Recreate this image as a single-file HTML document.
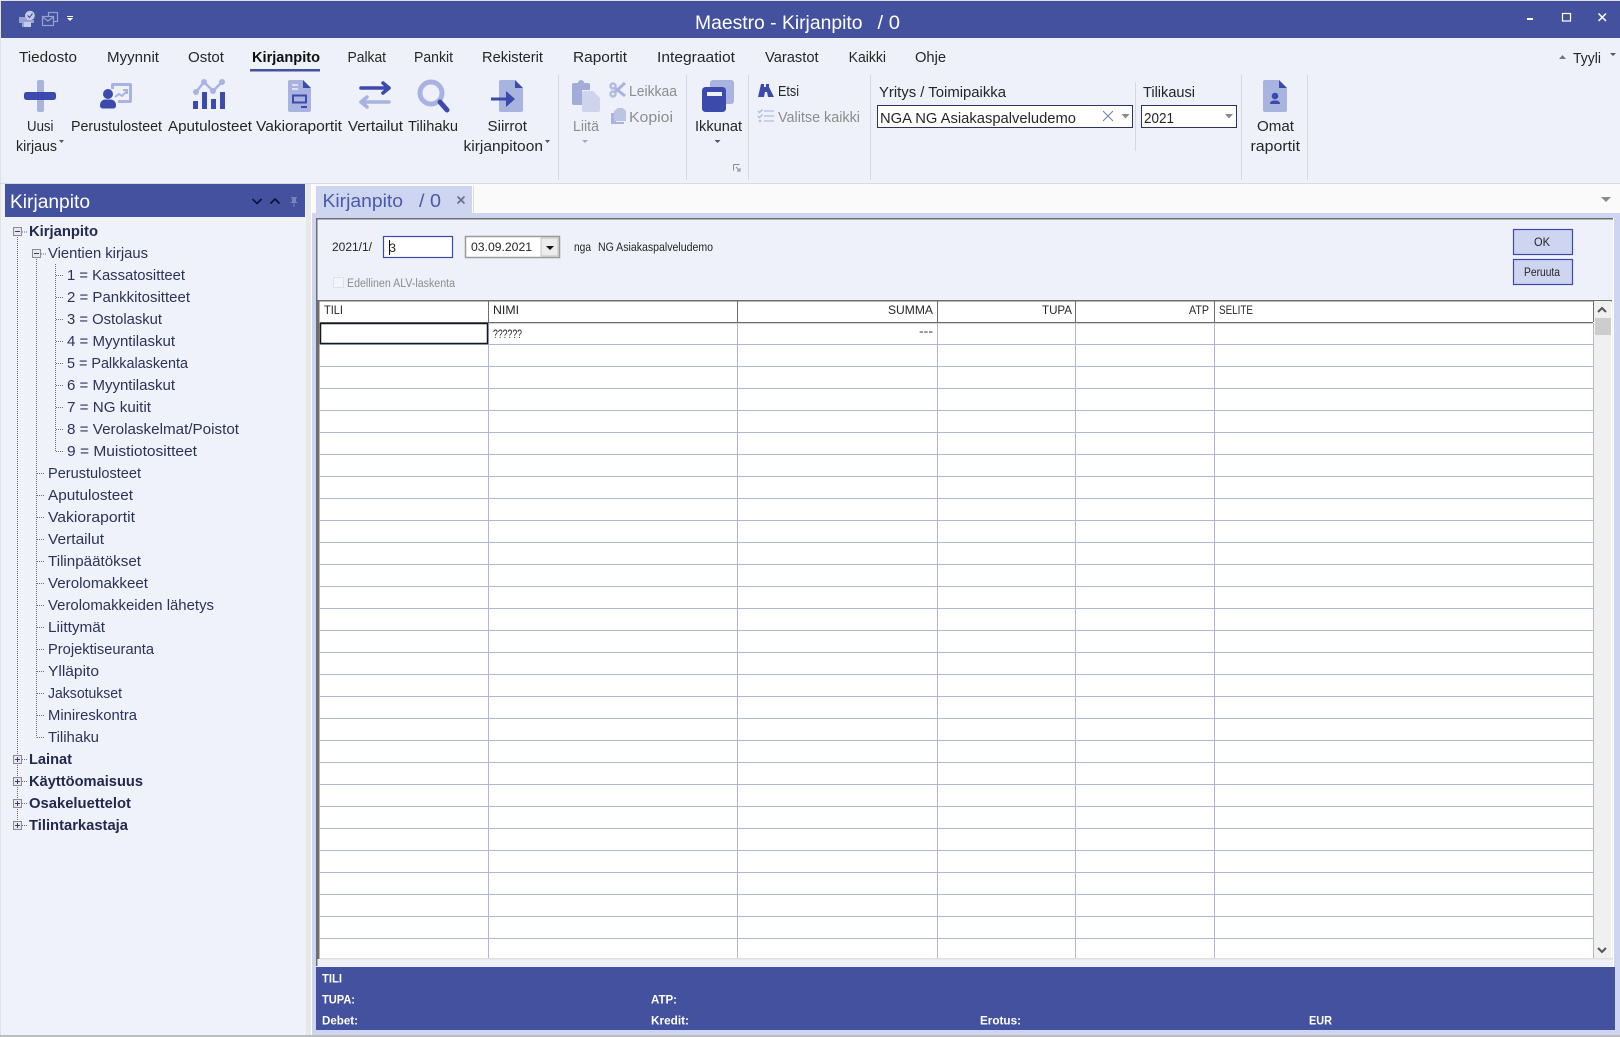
<!DOCTYPE html>
<html lang="fi"><head><meta charset="utf-8"><title>Maestro - Kirjanpito</title>
<style>
html,body{margin:0;padding:0;background:#eef1fa;overflow:hidden}
svg{display:block}
text{font-family:"Liberation Sans",sans-serif;white-space:pre}
.r{font-size:15px;fill:#262626}
.g{font-size:15px;fill:#8d8d8d}
.t{font-size:14.6px;fill:#2d3258}
.b{font-size:14.6px;fill:#23284f;font-weight:bold}
.s{font-size:12.2px;fill:#262626}
.f{font-size:12.4px;fill:#fff;font-weight:bold}
.l{fill:#a9b3e0}.d{fill:#3b4aab}
</style></head><body>
<svg xmlns="http://www.w3.org/2000/svg" width="1620" height="1037" viewBox="0 0 1620 1037">
<rect width="1620" height="1037" fill="#eef1fa"/>
<rect x="0" y="0" width="1620" height="1" fill="#e2e2e2"/>
<rect x="0" y="0" width="1" height="1037" fill="#e2e2e2"/>
<rect x="1" y="1" width="1619" height="37" fill="#43519e"/>

<!-- QAT -->
<path fill="#98a3d2" d="M19 17h6v-3h4v3h3v3h2v3h-3v4h-9v-4h-3z"/>
<rect x="24" y="22" width="7" height="5" fill="#c4cbe8"/>
<circle cx="30" cy="15.500" r="4.800" fill="#c4cbe8"/>
<path d="M27.500 15.500l2 2 3-4" stroke="#43519e" stroke-width="1.100" fill="none"/>
<g fill="none" stroke="#98a3d2" stroke-width="1.200">
<rect x="48.500" y="12.500" width="9" height="9"/><rect x="42.500" y="16.500" width="11" height="9" fill="#43519e"/><path d="M42.500 17l5.500 4 5.500-4"/>
</g>
<path d="M67 16h6v1h-6zM67 18h6l-3 3z" fill="#fff"/>

<!-- title -->
<text x="695" y="29" font-size="19.500" fill="#fff" textLength="167.500" lengthAdjust="spacingAndGlyphs">Maestro - Kirjanpito</text>
<text x="877.500" y="29" font-size="19.500" fill="#fff" textLength="22.500" lengthAdjust="spacingAndGlyphs">/ 0</text>
<rect x="1527" y="18" width="6" height="2" fill="#fff"/>
<rect x="1562.500" y="13.500" width="8" height="7.500" fill="none" stroke="#fff" stroke-width="1.200"/>
<path d="M1598.500 13.500l7.500 7.500M1606 13.500l-7.500 7.500" stroke="#fff" stroke-width="1.500"/>

<!-- menu tabs -->
<text class="r" x="19" y="62" textLength="58" lengthAdjust="spacingAndGlyphs">Tiedosto</text>
<text class="r" x="107" y="62" textLength="52" lengthAdjust="spacingAndGlyphs">Myynnit</text>
<text class="r" x="188" y="62" textLength="36" lengthAdjust="spacingAndGlyphs">Ostot</text>
<text class="r" x="252" y="62" textLength="68" lengthAdjust="spacingAndGlyphs" font-weight="bold" style="fill:#111">Kirjanpito</text>
<text class="r" x="347.500" y="62" textLength="38.500" lengthAdjust="spacingAndGlyphs">Palkat</text>
<text class="r" x="414" y="62" textLength="39" lengthAdjust="spacingAndGlyphs">Pankit</text>
<text class="r" x="482" y="62" textLength="61" lengthAdjust="spacingAndGlyphs">Rekisterit</text>
<text class="r" x="573" y="62" textLength="54" lengthAdjust="spacingAndGlyphs">Raportit</text>
<text class="r" x="657" y="62" textLength="78" lengthAdjust="spacingAndGlyphs">Integraatiot</text>
<text class="r" x="765" y="62" textLength="53.600" lengthAdjust="spacingAndGlyphs">Varastot</text>
<text class="r" x="848.600" y="62" textLength="37.400" lengthAdjust="spacingAndGlyphs">Kaikki</text>
<text class="r" x="915" y="62" textLength="31" lengthAdjust="spacingAndGlyphs">Ohje</text>
<text class="r" x="1573" y="63" textLength="28" lengthAdjust="spacingAndGlyphs">Tyyli</text>
<rect x="250" y="69" width="70" height="2.500" fill="#43519e"/>
<path d="M1559 59l3.500-4 3.500 4z" fill="#777"/>
<path d="M1610 53h6l-3 3z" fill="#555"/>

<!-- ribbon separators -->
<g fill="#d6d8de">
<rect x="558" y="75" width="1" height="105"/><rect x="686" y="75" width="1" height="105"/>
<rect x="748" y="75" width="1" height="105"/><rect x="870" y="75" width="1" height="105"/>
<rect x="1135" y="82" width="1" height="69"/><rect x="1241" y="75" width="1" height="105"/>
<rect x="1307" y="75" width="1" height="105"/>
</g>

<!-- Uusi -->
<rect x="37" y="80" width="7" height="32" rx="2" class="l"/>
<rect x="24" y="92" width="32" height="8" rx="2.500" class="d"/>
<!-- Perustulosteet -->
<path class="l" d="M115 83h15a2 2 0 0 1 2 2v16a2 2 0 0 1-2 2h-12v-3h11V86h-15v3h-3v-4a2 2 0 0 1 2-2z"/>
<path d="M115 97l4-3 3 2 5-5M123 90h4v4" fill="none" stroke="#a9b3e0" stroke-width="2"/>
<circle cx="108" cy="94" r="5" class="d"/>
<path class="d" d="M100 105c0-3 2.500-5.500 5-5.500h6c2.500 0 5 2.500 5 5.500 0 2.500-1 3.500-3 3.500h-10c-2 0-3-1-3-3.500z"/>
<!-- Aputulosteet -->
<path d="M196 92l8-10 9 9 9-9" fill="none" stroke="#a9b3e0" stroke-width="2.500"/>
<g class="l"><circle cx="196" cy="92" r="3"/><circle cx="204" cy="82" r="3"/><circle cx="213" cy="91" r="3"/><circle cx="222" cy="82" r="3"/></g>
<g class="d"><rect x="193" y="101" width="5" height="8"/><rect x="202" y="92" width="5" height="17"/><rect x="211" y="99" width="5" height="10"/><rect x="220" y="92" width="5" height="17"/></g>
<!-- Vakioraportit -->
<g transform="translate(20 0)">
<path class="l" d="M270 80h13l8 8v22a2 2 0 0 1-2 2h-19a2 2 0 0 1-2-2V82a2 2 0 0 1 2-2z"/>
<path class="d" d="M283 80l8 8h-8z"/>
<path d="M272 85h6M272 89h6" stroke="#eef1fa" stroke-width="1.500"/>
<rect x="273" y="95.500" width="13" height="7" fill="none" stroke="#3b4aab" stroke-width="2"/>
<rect x="281" y="106" width="6" height="2" class="d"/>
</g>
<!-- Vertailut -->
<path d="M361 88h28M383 83l6 5-6 5" fill="none" stroke="#3b4aab" stroke-width="3.600" stroke-linecap="round" stroke-linejoin="round"/>
<path d="M389 102h-28M367 97l-6 5 6 5" fill="none" stroke="#a9b3e0" stroke-width="3.600" stroke-linecap="round" stroke-linejoin="round"/>
<!-- Tilihaku -->
<circle cx="431" cy="93" r="11" fill="none" stroke="#a9b3e0" stroke-width="5"/>
<path d="M440 102l7 8" stroke="#3b4aab" stroke-width="5" stroke-linecap="round"/>
<!-- Siirrot -->
<path class="l" d="M501 80h14l8 8v22a2 2 0 0 1-2 2h-20a2 2 0 0 1-2-2V82a2 2 0 0 1 2-2z"/>
<path class="d" d="M515 80l8 8h-8z"/>
<path class="d" d="M491 97.500h15V91l9 8-9 8v-6.500h-15z"/>
<!-- Liita -->
<path fill="#a3acd9" d="M574 83h4a3 3 0 0 1 6 0h4a2 2 0 0 1 2 2v5h-8v15h-8a2 2 0 0 1-2-2V85a2 2 0 0 1 2-2z"/>
<path fill="#ced4ec" d="M584 91h9l7 7v12a2 2 0 0 1-2 2h-14a2 2 0 0 1-2-2V93a2 2 0 0 1 2-2z"/>
<!-- Leikkaa -->
<g fill="none" stroke="#b4bce2" stroke-width="2.500"><circle cx="613" cy="86" r="2.500"/><circle cx="613" cy="94" r="2.500"/></g>
<path d="M615 88l10 8M615 92l10-9" stroke="#a9b3e0" stroke-width="3"/>
<!-- Kopioi -->
<path fill="#a9b3e0" d="M611 113h5v9h8v2h-13z"/>
<path fill="#bcc4e6" d="M618 108h5l3 3v10h-12v-10z"/>
<!-- Ikkunat -->
<rect x="710" y="80" width="24" height="24" rx="3" class="l"/>
<rect x="702" y="87" width="24" height="25" rx="3.500" class="d"/>
<rect x="707" y="92" width="15" height="4" fill="#eef1fa"/>
<!-- launcher -->
<path d="M733.500 164.500h6M733.500 164.500v6M740 171l-4-4M740 168v3h-3" fill="none" stroke="#8c8c8c" stroke-width="1"/>
<!-- Etsi -->
<path class="d" d="M761 84h3v3h2v-3h3v3l5 10h-6l-1-5h-2l-1 5h-6z"/>
<!-- Valitse kaikki -->
<g transform="translate(14 -1)">
<path d="M744 112l1.500 1.500 3-3M744 117l1.500 1.500 3-3" fill="none" stroke="#b4bce2" stroke-width="1.500"/>
<circle cx="746" cy="122" r="1.300" fill="#b4bce2"/>
<path d="M750 112h10M750 117h10M750 122h10" stroke="#c4cbea" stroke-width="1.800"/>
</g>
<!-- Omat -->
<g transform="translate(6 0)">
<path class="l" d="M1259 80h14l8 8v22a2 2 0 0 1-2 2h-20a2 2 0 0 1-2-2V82a2 2 0 0 1 2-2z"/>
<path class="d" d="M1273 80l8 8h-8z"/>
<circle cx="1269" cy="96" r="3.300" class="d"/>
<path class="d" d="M1264 104c0-2.500 2-3.500 3.500-3.500h3c1.500 0 3.500 1 3.500 3.500z"/>
</g>

<!-- ribbon labels -->
<text class="r" x="27" y="131" textLength="26.500" lengthAdjust="spacingAndGlyphs">Uusi</text>
<text class="r" x="16" y="151" textLength="41" lengthAdjust="spacingAndGlyphs">kirjaus</text>
<path d="M59 140h5l-2.500 3z" fill="#555"/>
<text class="r" x="71" y="131" textLength="91" lengthAdjust="spacingAndGlyphs">Perustulosteet</text>
<text class="r" x="168" y="131" textLength="84" lengthAdjust="spacingAndGlyphs">Aputulosteet</text>
<text class="r" x="256" y="131" textLength="86" lengthAdjust="spacingAndGlyphs">Vakioraportit</text>
<text class="r" x="348" y="131" textLength="55" lengthAdjust="spacingAndGlyphs">Vertailut</text>
<text class="r" x="408" y="131" textLength="50" lengthAdjust="spacingAndGlyphs">Tilihaku</text>
<text class="r" x="487.500" y="131" textLength="39.500" lengthAdjust="spacingAndGlyphs">Siirrot</text>
<text class="r" x="463.500" y="151" textLength="79.500" lengthAdjust="spacingAndGlyphs">kirjanpitoon</text>
<path d="M545 140h5l-2.500 3z" fill="#555"/>
<text class="g" x="573" y="131" textLength="26" lengthAdjust="spacingAndGlyphs">Liitä</text>
<path d="M582 140h6l-3 3z" fill="#aaa"/>
<text class="g" x="629" y="96" textLength="48" lengthAdjust="spacingAndGlyphs">Leikkaa</text>
<text class="g" x="629" y="122" textLength="44" lengthAdjust="spacingAndGlyphs">Kopioi</text>
<text class="r" x="695" y="131" textLength="47" lengthAdjust="spacingAndGlyphs">Ikkunat</text>
<path d="M714.500 140h6l-3 3z" fill="#555"/>
<text class="r" x="778" y="96" textLength="21" lengthAdjust="spacingAndGlyphs">Etsi</text>
<text class="g" x="778" y="122" textLength="82" lengthAdjust="spacingAndGlyphs">Valitse kaikki</text>
<text class="r" x="879" y="97" textLength="127" lengthAdjust="spacingAndGlyphs">Yritys / Toimipaikka</text>
<rect x="877.500" y="105.500" width="255" height="22" fill="#fff" stroke="#2c3560" stroke-width="1"/>
<text class="r" x="880" y="123" textLength="196" lengthAdjust="spacingAndGlyphs">NGA NG Asiakaspalveludemo</text>
<path d="M1103 111l10 10M1113 111l-10 10" stroke="#6f7fa8" stroke-width="1"/>
<path d="M1121.500 114h8l-4 4.500z" fill="#888"/>
<text class="r" x="1143" y="97" textLength="52" lengthAdjust="spacingAndGlyphs">Tilikausi</text>
<rect x="1141.500" y="105.500" width="95" height="22" fill="#fff" stroke="#2c3560" stroke-width="1"/>
<text class="r" x="1144" y="123" textLength="30" lengthAdjust="spacingAndGlyphs">2021</text>
<path d="M1225 114h8l-4 4.500z" fill="#888"/>
<text class="r" x="1257" y="131" textLength="37" lengthAdjust="spacingAndGlyphs">Omat</text>
<text class="r" x="1250.500" y="151" textLength="49.500" lengthAdjust="spacingAndGlyphs">raportit</text>

<!-- ribbon bottom -->
<rect x="0" y="183" width="1620" height="1" fill="#d8dae0"/>

<!-- left panel -->
<rect x="1" y="184" width="305" height="852" fill="#eff2fb"/>
<rect x="5" y="184" width="300" height="33" fill="#43519e"/>
<text x="10" y="208" font-size="19" fill="#fff" textLength="80" lengthAdjust="spacingAndGlyphs">Kirjanpito</text>
<path d="M252.500 199l4.500 4.500 4.500-4.500M270.500 203.500l4.500-4.500 4.500 4.500" fill="none" stroke="#0d1130" stroke-width="1.600"/>
<path d="M291 197h6v1h-1v4h1.500v1h-3v4h-1v-4h-3v-1h1.500v-4h-1z" fill="#7b84b8"/>

<!-- tree connectors -->
<g stroke="#6c6c74" stroke-width="1" stroke-dasharray="1 1" fill="none">
<path d="M17.500 237V822M36.500 259V737.500M55.500 264V451.500"/>
<path d="M22 232h6M41 254h6"/>
<path d="M56 275.500h8M56 297.500h8M56 319.500h8M56 341.500h8M56 363.500h8M56 385.500h8M56 407.500h8M56 429.500h8M56 451.500h8"/>
<path d="M37 473.500h8M37 495.500h8M37 517.500h8M37 539.500h8M37 561.500h8M37 583.500h8M37 605.500h8M37 627.500h8M37 649.500h8M37 671.500h8M37 693.500h8M37 715.500h8M37 737.500h8"/>
<path d="M22 759.500h6M22 781.500h6M22 803.500h6M22 825.500h6"/>
</g>
<g fill="#e8e8ec" stroke="#8a8a92" stroke-width="1">
<rect x="13.500" y="227.500" width="8" height="8"/><rect x="32.500" y="249.500" width="8" height="8"/>
<rect x="13.500" y="755.500" width="8" height="8"/><rect x="13.500" y="777.500" width="8" height="8"/>
<rect x="13.500" y="799.500" width="8" height="8"/><rect x="13.500" y="821.500" width="8" height="8"/>
</g>
<path d="M15 231.500h5M34 253.500h5M15 759.500h5M17.500 757v5M15 781.500h5M17.500 779v5M15 803.500h5M17.500 801v5M15 825.500h5M17.500 823v5" stroke="#3a3f70" stroke-width="1"/>

<!-- tree -->
<text class="b" x="29" y="236" textLength="69" lengthAdjust="spacingAndGlyphs">Kirjanpito</text>
<text class="t" x="48" y="258" textLength="100" lengthAdjust="spacingAndGlyphs">Vientien kirjaus</text>
<text class="t" x="67" y="280" textLength="118" lengthAdjust="spacingAndGlyphs">1 = Kassatositteet</text>
<text class="t" x="67" y="302" textLength="123" lengthAdjust="spacingAndGlyphs">2 = Pankkitositteet</text>
<text class="t" x="67" y="324" textLength="95" lengthAdjust="spacingAndGlyphs">3 = Ostolaskut</text>
<text class="t" x="67" y="346" textLength="108" lengthAdjust="spacingAndGlyphs">4 = Myyntilaskut</text>
<text class="t" x="67" y="368" textLength="121" lengthAdjust="spacingAndGlyphs">5 = Palkkalaskenta</text>
<text class="t" x="67" y="390" textLength="108" lengthAdjust="spacingAndGlyphs">6 = Myyntilaskut</text>
<text class="t" x="67" y="412" textLength="84" lengthAdjust="spacingAndGlyphs">7 = NG kuitit</text>
<text class="t" x="67" y="434" textLength="172" lengthAdjust="spacingAndGlyphs">8 = Verolaskelmat/Poistot</text>
<text class="t" x="67" y="456" textLength="130" lengthAdjust="spacingAndGlyphs">9 = Muistiotositteet</text>
<text class="t" x="48" y="478" textLength="93" lengthAdjust="spacingAndGlyphs">Perustulosteet</text>
<text class="t" x="48" y="500" textLength="85" lengthAdjust="spacingAndGlyphs">Aputulosteet</text>
<text class="t" x="48" y="522" textLength="87" lengthAdjust="spacingAndGlyphs">Vakioraportit</text>
<text class="t" x="48" y="544" textLength="56" lengthAdjust="spacingAndGlyphs">Vertailut</text>
<text class="t" x="48" y="566" textLength="93" lengthAdjust="spacingAndGlyphs">Tilinpäätökset</text>
<text class="t" x="48" y="588" textLength="100" lengthAdjust="spacingAndGlyphs">Verolomakkeet</text>
<text class="t" x="48" y="610" textLength="166" lengthAdjust="spacingAndGlyphs">Verolomakkeiden lähetys</text>
<text class="t" x="48" y="632" textLength="57" lengthAdjust="spacingAndGlyphs">Liittymät</text>
<text class="t" x="48" y="654" textLength="106" lengthAdjust="spacingAndGlyphs">Projektiseuranta</text>
<text class="t" x="48" y="676" textLength="51" lengthAdjust="spacingAndGlyphs">Ylläpito</text>
<text class="t" x="48" y="698" textLength="74" lengthAdjust="spacingAndGlyphs">Jaksotukset</text>
<text class="t" x="48" y="720" textLength="89" lengthAdjust="spacingAndGlyphs">Minireskontra</text>
<text class="t" x="48" y="742" textLength="51" lengthAdjust="spacingAndGlyphs">Tilihaku</text>
<text class="b" x="29" y="764" textLength="43" lengthAdjust="spacingAndGlyphs">Lainat</text>
<text class="b" x="29" y="786" textLength="114" lengthAdjust="spacingAndGlyphs">Käyttöomaisuus</text>
<text class="b" x="29" y="808" textLength="102" lengthAdjust="spacingAndGlyphs">Osakeluettelot</text>
<text class="b" x="29" y="830" textLength="99" lengthAdjust="spacingAndGlyphs">Tilintarkastaja</text>

<!-- splitter + doc frame -->
<rect x="306" y="184" width="5" height="852" fill="#e8e8e8"/>
<rect x="311" y="184" width="1" height="852" fill="#fff"/>
<rect x="312" y="184" width="1308" height="851" fill="#cdd5f0"/>
<rect x="312" y="184" width="1308" height="29" fill="#fafafa"/>
<rect x="316" y="186" width="156" height="27" fill="#cdd5f0"/>
<rect x="473" y="186" width="1" height="27" fill="#dcdcdc"/>
<text x="322.500" y="207" font-size="18" fill="#4a5aa8" textLength="80.500" lengthAdjust="spacingAndGlyphs">Kirjanpito</text>
<text x="419" y="207" font-size="18" fill="#4a5aa8" textLength="22" lengthAdjust="spacingAndGlyphs">/ 0</text>
<path d="M457.500 196.500l7 7M464.500 196.500l-7 7" stroke="#6a6f88" stroke-width="1.700"/>
<path d="M1601 197h10l-5 5z" fill="#8a8a8a"/>

<!-- doc -->
<rect x="316" y="218" width="1297" height="749" fill="#eef1fa"/>
<rect x="316" y="218" width="1297" height="1.500" fill="#6e6e6e"/>
<rect x="316" y="218" width="1.500" height="748" fill="#6e6e6e"/>
<rect x="1613" y="218" width="1" height="749" fill="#fff"/>

<text class="s" x="332" y="251" textLength="40" lengthAdjust="spacingAndGlyphs">2021/1/</text>
<rect x="383.500" y="236.500" width="69" height="21" fill="#fff" stroke="#3b4aab" stroke-width="1.200"/>
<path d="M389.500 240v15" stroke="#111" stroke-width="1"/>
<text class="s" x="389" y="252" textLength="7" lengthAdjust="spacingAndGlyphs">3</text>
<rect x="465.500" y="236.500" width="94" height="21" fill="#fff" stroke="#9a9a9a" stroke-width="1.500"/>
<text class="s" x="471" y="251" textLength="61" lengthAdjust="spacingAndGlyphs">03.09.2021</text>
<rect x="541" y="238" width="17" height="18" fill="#ececec" stroke="#bbb" stroke-width=".8"/>
<path d="M546 246h8l-4 4z" fill="#111"/>
<text class="s" x="574" y="251" textLength="17" lengthAdjust="spacingAndGlyphs">nga</text>
<text class="s" x="598" y="251" textLength="115" lengthAdjust="spacingAndGlyphs">NG Asiakaspalveludemo</text>
<rect x="333.500" y="277.500" width="10" height="10" fill="#f4f5fa" stroke="#dfe1ea" stroke-width="1"/>
<text class="s" x="347" y="287" textLength="108" lengthAdjust="spacingAndGlyphs" style="fill:#8d8d8d">Edellinen ALV-laskenta</text>
<rect x="1513.500" y="229.500" width="59" height="25" fill="#cdd5f0" stroke="#3b4aab" stroke-width="1.200"/>
<text class="s" x="1534" y="246" textLength="16" lengthAdjust="spacingAndGlyphs">OK</text>
<rect x="1513.500" y="259.500" width="59" height="25" fill="#cdd5f0" stroke="#3b4aab" stroke-width="1.200"/>
<text class="s" x="1524" y="276" textLength="36" lengthAdjust="spacingAndGlyphs">Peruuta</text>

<!-- grid -->
<rect x="317" y="300" width="1295" height="659" fill="#fff"/>
<rect x="317" y="300" width="2.500" height="659" fill="#6e6e6e"/>
<rect x="317" y="300" width="1295" height="1.500" fill="#6e6e6e"/>
<rect x="320" y="322" width="1273" height="1.300" fill="#6e6e6e"/>
<path fill="none" stroke="#b0b7d0" stroke-width="1" shape-rendering="crispEdges" d="M320 344.500H1593M320 366.500H1593M320 388.500H1593M320 410.500H1593M320 432.500H1593M320 454.500H1593M320 476.500H1593M320 498.500H1593M320 520.500H1593M320 542.500H1593M320 564.500H1593M320 586.500H1593M320 608.500H1593M320 630.500H1593M320 652.500H1593M320 674.500H1593M320 696.500H1593M320 718.500H1593M320 740.500H1593M320 762.500H1593M320 784.500H1593M320 806.500H1593M320 828.500H1593M320 850.500H1593M320 872.500H1593M320 894.500H1593M320 916.500H1593M320 938.500H1593"/>
<path fill="none" stroke="#b0b7d0" stroke-width="1" shape-rendering="crispEdges" d="M488.500 323V958M737.500 323V958M937.500 323V958M1075.500 323V958M1214.500 323V958M1593.500 323V958"/>
<path fill="none" stroke="#6e6e6e" stroke-width="1" shape-rendering="crispEdges" d="M488.500 301V322M737.500 301V322M937.500 301V322M1075.500 301V322M1214.500 301V322M1593.500 301V322"/>
<rect x="320" y="958" width="1293" height="1.500" fill="#e0e0e0"/>
<rect x="320.500" y="323.500" width="167" height="20" fill="#fff" stroke="#14162a" stroke-width="1.500"/>
<text class="s" x="324" y="314" textLength="19" lengthAdjust="spacingAndGlyphs">TILI</text>
<text class="s" x="493" y="314" textLength="26" lengthAdjust="spacingAndGlyphs">NIMI</text>
<text class="s" x="888" y="314" textLength="45" lengthAdjust="spacingAndGlyphs">SUMMA</text>
<text class="s" x="1042" y="314" textLength="30" lengthAdjust="spacingAndGlyphs">TUPA</text>
<text class="s" x="1189" y="314" textLength="20" lengthAdjust="spacingAndGlyphs">ATP</text>
<text class="s" x="1219" y="314" textLength="34" lengthAdjust="spacingAndGlyphs">SELITE</text>
<text class="s" x="493" y="338" textLength="29" lengthAdjust="spacingAndGlyphs">??????</text>
<text class="s" x="919" y="335" textLength="14" lengthAdjust="spacingAndGlyphs">---</text>
<!-- scrollbar -->
<rect x="1594" y="301" width="17" height="657" fill="#f0f0f0"/>
<rect x="1595" y="318" width="16" height="17" fill="#cdcdcd"/>
<path d="M1598 312l4-4 4 4M1598 948l4 4 4-4" fill="none" stroke="#555" stroke-width="2"/>

<!-- footer -->
<rect x="316" y="967" width="1299" height="63" fill="#43519e"/>
<text class="f" x="322" y="982.500" textLength="20" lengthAdjust="spacingAndGlyphs">TILI</text>
<text class="f" x="322" y="1003.500" textLength="33" lengthAdjust="spacingAndGlyphs">TUPA:</text>
<text class="f" x="322" y="1024.500" textLength="36" lengthAdjust="spacingAndGlyphs">Debet:</text>
<text class="f" x="651" y="1003.500" textLength="26" lengthAdjust="spacingAndGlyphs">ATP:</text>
<text class="f" x="651" y="1024.500" textLength="38" lengthAdjust="spacingAndGlyphs">Kredit:</text>
<text class="f" x="980" y="1024.500" textLength="41" lengthAdjust="spacingAndGlyphs">Erotus:</text>
<text class="f" x="1309" y="1024.500" textLength="23" lengthAdjust="spacingAndGlyphs">EUR</text>

<!-- bottom edge -->
<rect x="0" y="1035" width="1620" height="2" fill="#bdbdbd"/>
</svg>
</body></html>
